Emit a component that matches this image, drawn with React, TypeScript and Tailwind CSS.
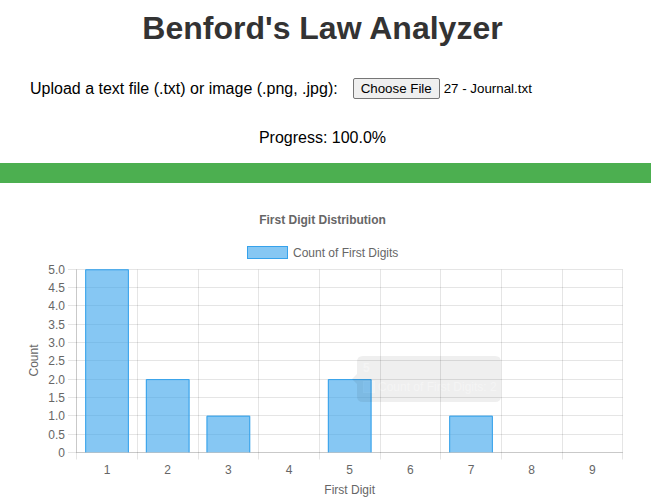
import React from "react";

const counts = [5, 2, 1, 0, 2, 0, 1, 0, 0];
const X0 = 76.7;
const X1 = 622.7;
const Y0 = 452.3; // value 0
const YTOP = 269.3; // value 5
const CW = (X1 - X0) / 9;
const yFor = (v: number) => Y0 - ((Y0 - YTOP) * v) / 5;
const crisp = (v: number) => Math.floor(v) + 0.5;

function Chart() {
  const yTicks = [0, 0.5, 1, 1.5, 2, 2.5, 3, 3.5, 4, 4.5, 5];
  const barW = CW * 0.72;
  return (
    <svg width={651} height={321} viewBox="0 183 651 321" className="block">
      {/* title */}
      <text x={322.5} y={224} textAnchor="middle" fontSize={12} fontWeight={700} fill="#666">
        First Digit Distribution
      </text>
      {/* legend */}
      <rect x={247.5} y={246.5} width={40} height={12} fill="rgba(54,162,235,0.6)" stroke="rgb(54,162,235)" strokeWidth={1} />
      <text x={293} y={257} fontSize={12} fill="#666">
        Count of First Digits
      </text>
      {/* horizontal grid */}
      {yTicks.map((t) => {
        const y = crisp(yFor(t));
        return (
          <g key={"h" + t}>
            <line x1={68} x2={X1} y1={y} y2={y} stroke="rgba(0,0,0,0.1)" strokeWidth={1} />
            <text x={65} y={y + 4} textAnchor="end" fontSize={12} fill="#666">
              {t === 0 ? "0" : t.toFixed(1)}
            </text>
          </g>
        );
      })}
      {/* vertical grid */}
      {Array.from({ length: 10 }).map((_, i) => {
        const x = crisp(X0 + CW * i);
        return <line key={"v" + i} x1={x} x2={x} y1={crisp(YTOP)} y2={459.5} stroke="rgba(0,0,0,0.1)" strokeWidth={1} />;
      })}
      {/* axes borders */}
      <line x1={crisp(X0)} x2={X1} y1={crisp(Y0)} y2={crisp(Y0)} stroke="rgba(0,0,0,0.12)" strokeWidth={1} />
      <line x1={crisp(X0)} x2={crisp(X0)} y1={crisp(YTOP)} y2={crisp(Y0)} stroke="rgba(0,0,0,0.12)" strokeWidth={1} />
      {/* bars */}
      {counts.map((c, i) => {
        if (c === 0) return null;
        const cx = X0 + CW * (i + 0.5);
        const left = cx - barW / 2;
        const right = cx + barW / 2;
        const top = yFor(c);
        return (
          <g key={"b" + i}>
            <rect x={left} y={top} width={barW} height={Y0 - top} fill="rgba(54,162,235,0.6)" />
            <path
              d={`M${left + 0.5} ${Y0} L${left + 0.5} ${top + 0.5} L${right - 0.5} ${top + 0.5} L${right - 0.5} ${Y0}`}
              fill="none"
              stroke="rgb(54,162,235)"
              strokeWidth={1}
            />
          </g>
        );
      })}
      {/* x labels */}
      {counts.map((_, i) => (
        <text key={"xl" + i} x={X0 + CW * (i + 0.5)} y={474} textAnchor="middle" fontSize={12} fill="#666">
          {i + 1}
        </text>
      ))}
      <text x={349.7} y={494} textAnchor="middle" fontSize={12} fill="#666">
        First Digit
      </text>
      <text x={38} y={360.5} textAnchor="middle" fontSize={12} fill="#666" transform="rotate(-90 38 360.5)">
        Count
      </text>
      {/* fading tooltip */}
      <g opacity={0.075}>
        <path
          d="M363 356 H495 Q501 356 501 362 V396 Q501 402 495 402 H363 Q357 402 357 396 V384 L352 379 L357 374 V362 Q357 356 363 356 Z"
          fill="rgba(0,0,0,0.8)"
        />
        <g opacity={0.35}>
          <text x={363} y={372} fontSize={12} fontWeight={700} fill="#fff">
            5
          </text>
          <rect x={363} y={381} width={12} height={12} fill="#fff" />
          <rect x={364} y={382} width={10} height={10} fill="rgba(54,162,235,0.6)" />
          <text x={378} y={391} fontSize={12} fill="#fff">
            Count of First Digits: 2
          </text>
        </g>
      </g>
    </svg>
  );
}

export default function App() {
  return (
    <div className="w-[651px] h-[504px] overflow-hidden bg-white font-['Liberation_Sans',Arial,sans-serif]">
      <div className="pr-[6px]">
        <h1 className="pt-[10px] text-center text-[32px] leading-[37px] font-bold text-[#333]">
          Benford's Law Analyzer
        </h1>
        <div className="mt-[31px] flex h-[21px] items-center pl-[30px]">
          <span className="text-[16px] leading-[18px] text-black">
            Upload a text file (.txt) or image (.png, .jpg):
          </span>
          <button className="ml-[15px] h-[21px] w-[87px] rounded-[2px] border border-[#767676] bg-[#efefef] text-[13.333px] leading-[15px] text-black">
            Choose File
          </button>
          <span className="ml-[4px] text-[13.333px] leading-[15px] text-black">27 - Journal.txt</span>
        </div>
        <div className="mt-[30px] text-center text-[16px] leading-[18px] text-black">Progress: 100.0%</div>
      </div>
      <div className="mt-[16px] h-[20px] w-full bg-[#4caf50]" />
      <Chart />
    </div>
  );
}
